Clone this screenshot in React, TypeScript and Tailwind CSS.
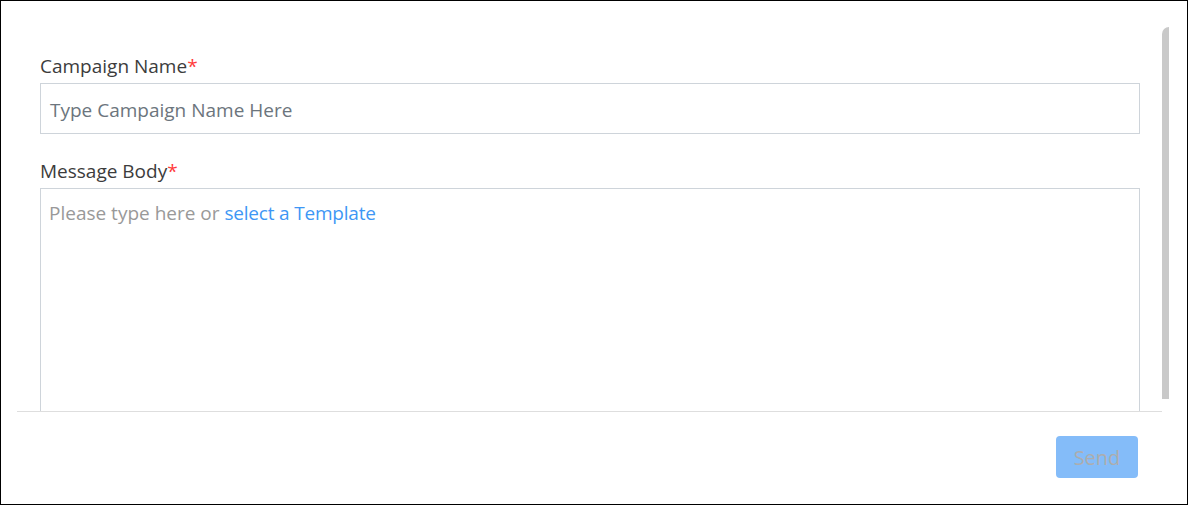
import React from "react";

export default function App() {
  return (
    <div
      className="w-[1188px] h-[505px] border border-black bg-white flex flex-col overflow-hidden"
      style={{ fontFamily: '"Open Sans", "Noto Sans", sans-serif' }}
    >
      <div className="h-[410px] flex shrink-0">
        <div className="ml-[16px] w-[1145px] overflow-hidden pl-[23px] pr-[22px] pt-[52px]">
          <div className="text-[19px] leading-[26px] text-[#3c3c3c]">
            Campaign Name<span className="text-[#ff3b3b]">*</span>
          </div>
          <div className="mt-[4px] h-[51px] border border-[#ced4da] flex items-center pl-[9px] pt-[3px] text-[19px] text-[#6c757d]">
            Type Campaign Name Here
          </div>
          <div className="mt-[24px] text-[19px] leading-[26px] text-[#3c3c3c]">
            Message Body<span className="text-[#ff3b3b]">*</span>
          </div>
          <div className="mt-[4px] h-[260px] border border-[#ced4da] px-[8px] pt-[11px] text-[19px] leading-[26px] text-[#999999]">
            Please type here or <span className="text-[#3e97f5] tracking-[-0.2px]">select a Template</span>
          </div>
        </div>
        <div className="w-[7px] mt-[26px] h-[372px] bg-[#c9c9c9] rounded-tl-[7px]" />
      </div>
      <div className="ml-[16px] w-[1145px] h-px bg-[#dedede]" />
      <div className="flex justify-end pr-[49px] pt-[24px]">
        <div className="w-[82px] h-[42px] rounded-[4px] bg-[#84bcf9] text-[#adadad] text-[20px] flex items-center justify-center pt-[1px]">
          Send
        </div>
      </div>
    </div>
  );
}
